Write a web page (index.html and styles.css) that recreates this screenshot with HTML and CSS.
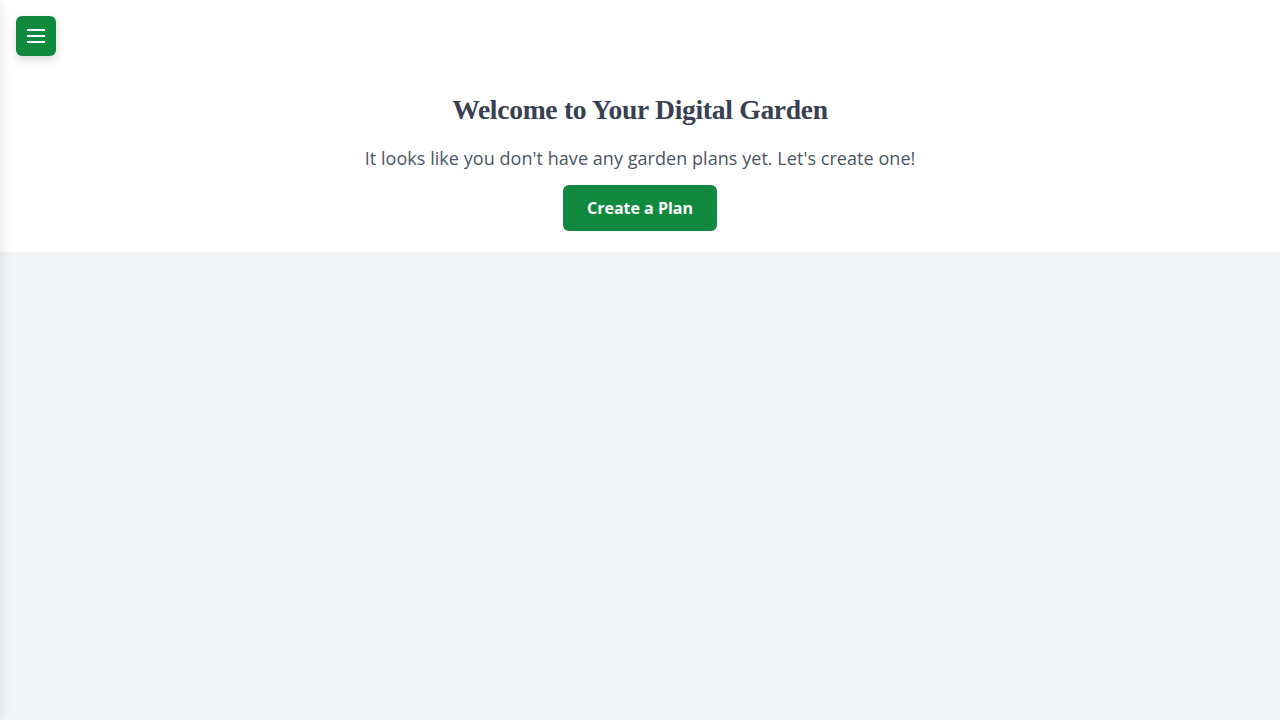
FILE: index.html
```html
<!DOCTYPE html>
<html lang="en">
<head>
<meta charset="utf-8">
<title>Digital Garden</title>
<link rel="stylesheet" href="styles.css">
</head>
<body>
<aside class="sidebar"></aside>
<button class="menu-btn" aria-label="Menu">
  <svg width="24" height="24" viewBox="0 0 24 24" fill="none" stroke="#fff" stroke-width="2" stroke-linecap="butt">
    <line x1="3" y1="6" x2="21" y2="6"/>
    <line x1="3" y1="12" x2="21" y2="12"/>
    <line x1="3" y1="18" x2="21" y2="18"/>
  </svg>
</button>
<main class="main">
  <section class="hero">
    <h1 class="title">Welcome to Your Digital Garden</h1>
    <p class="lead">It looks like you don't have any garden plans yet. Let's create one!</p>
    <button class="cta">Create a Plan</button>
  </section>
  <section class="content"></section>
</main>
</body>
</html>
```
FILE: styles.css
```css
html, body {
  margin: 0;
  padding: 0;
  height: 100%;
}
body {
  font-family: "Open Sans", "Liberation Sans", sans-serif;
  background: #f3f4f6;
  overflow: hidden;
}
.sidebar {
  position: fixed;
  top: 0;
  left: -256px;
  width: 256px;
  height: 100%;
  background: #fff;
  box-shadow: 0 0 12px rgba(0,0,0,0.12);
}
.menu-btn {
  position: fixed;
  top: 16px;
  left: 16px;
  width: 40px;
  height: 40px;
  border: none;
  border-radius: 6px;
  background: #118a3f;
  box-shadow: 0 4px 10px rgba(0,0,0,0.15);
  display: flex;
  align-items: center;
  justify-content: center;
  padding: 0;
  z-index: 10;
}
.menu-btn svg {
  display: block;
}
.main {
  display: flex;
  flex-direction: column;
  height: 100%;
}
.hero {
  background: #fff;
  padding: 92px 16px 21px;
  display: flex;
  flex-direction: column;
  align-items: center;
  text-align: center;
}
.title {
  margin: 0;
  font-family: "Liberation Serif", "DejaVu Serif", serif;
  font-weight: 700;
  font-size: 27.6px;
  line-height: 36px;
  color: #374151;
  letter-spacing: -0.3px;
}
.lead {
  margin: 16px 0 13px;
  font-size: 18px;
  line-height: 28px;
  color: #4b5563;
  letter-spacing: 0.05px;
}
.cta {
  font-family: "Open Sans", "Liberation Sans", sans-serif;
  font-weight: 700;
  font-size: 16px;
  color: #fff;
  background: #118a3f;
  border: none;
  border-radius: 6px;
  width: 154px;
  height: 46px;
  padding: 0;
}
.content {
  flex: 1;
}
```
